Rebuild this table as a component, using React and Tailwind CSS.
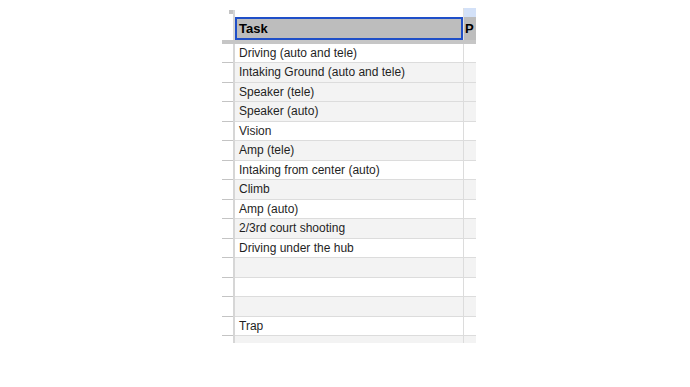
const rows = [
  { label: "Driving (auto and tele)", shade: false },
  { label: "Intaking Ground (auto and tele)", shade: true },
  { label: "Speaker (tele)", shade: true },
  { label: "Speaker (auto)", shade: true },
  { label: "Vision", shade: false },
  { label: "Amp (tele)", shade: true },
  { label: "Intaking from center (auto)", shade: false },
  { label: "Climb", shade: true },
  { label: "Amp (auto)", shade: false },
  { label: "2/3rd court shooting", shade: true },
  { label: "Driving under the hub", shade: false },
  { label: "", shade: true },
  { label: "", shade: false },
  { label: "", shade: true },
  { label: "Trap", shade: false },
  { label: "", shade: true },
];

export default function App() {
  return (
    <div
      className="w-[690px] h-[387px] bg-white"
      style={{ fontFamily: '"Liberation Sans", Arial, sans-serif' }}
    >
      <div className="ml-[222px] pt-[8px]">
        <div className="w-[254px] h-[335px] overflow-hidden flex flex-col">
          {/* column header strip */}
          <div className="flex h-[9px] shrink-0">
            <div className="w-[13px] relative">
              <div className="absolute left-[7px] top-[2px] w-[5px] h-[4px] bg-[#c4c4c4]" />
              <div className="absolute left-[11px] top-[2px] bottom-0 w-[2px] bg-[#d6d6d6]" />
            </div>
            <div className="w-[228px]" />
            <div className="w-[1px] bg-[#e0e0e0]" />
            <div className="w-[12px] bg-[#d3e1f8]" />
          </div>

          {/* header row */}
          <div className="flex h-[23px] shrink-0">
            <div className="w-[13px] border-r-2 border-[#d6d6d6]" />
            <div className="w-[228px] bg-[#bdbdbd] border-2 border-[#1f4fc8] flex items-center pl-[2px]">
              <span className="text-[13px] font-bold text-black">Task</span>
            </div>
            <div className="w-[1px] bg-[#e0e0e0]" />
            <div className="w-[12px] bg-[#bdbdbd] flex items-center pl-[1px]">
              <span className="text-[13px] font-bold text-black">P</span>
            </div>
          </div>

          {/* frozen row divider */}
          <div className="h-[3.5px] shrink-0 bg-[#c6c6c6]" />

          {rows.map((row, i) => (
            <div key={i} className="flex h-[19.5px] shrink-0">
              <div className="w-[13px] flex">
                <div className="w-[11px] border-b border-[#c4c4c4]" />
                <div className="w-[2px] bg-[#d6d6d6]" />
              </div>
              <div
                className={`w-[228px] border-b border-[#dcdcdc] flex items-center pl-[4px] ${
                  row.shade ? "bg-[#f3f3f3]" : "bg-white"
                }`}
              >
                <span className="text-[12px] text-[#1f1f1f] whitespace-nowrap">{row.label}</span>
              </div>
              <div className="w-[1px] bg-[#dcdcdc]" />
              <div
                className={`w-[12px] border-b border-[#dcdcdc] ${
                  row.shade ? "bg-[#f3f3f3]" : "bg-white"
                }`}
              />
            </div>
          ))}
        </div>
      </div>
    </div>
  );
}
